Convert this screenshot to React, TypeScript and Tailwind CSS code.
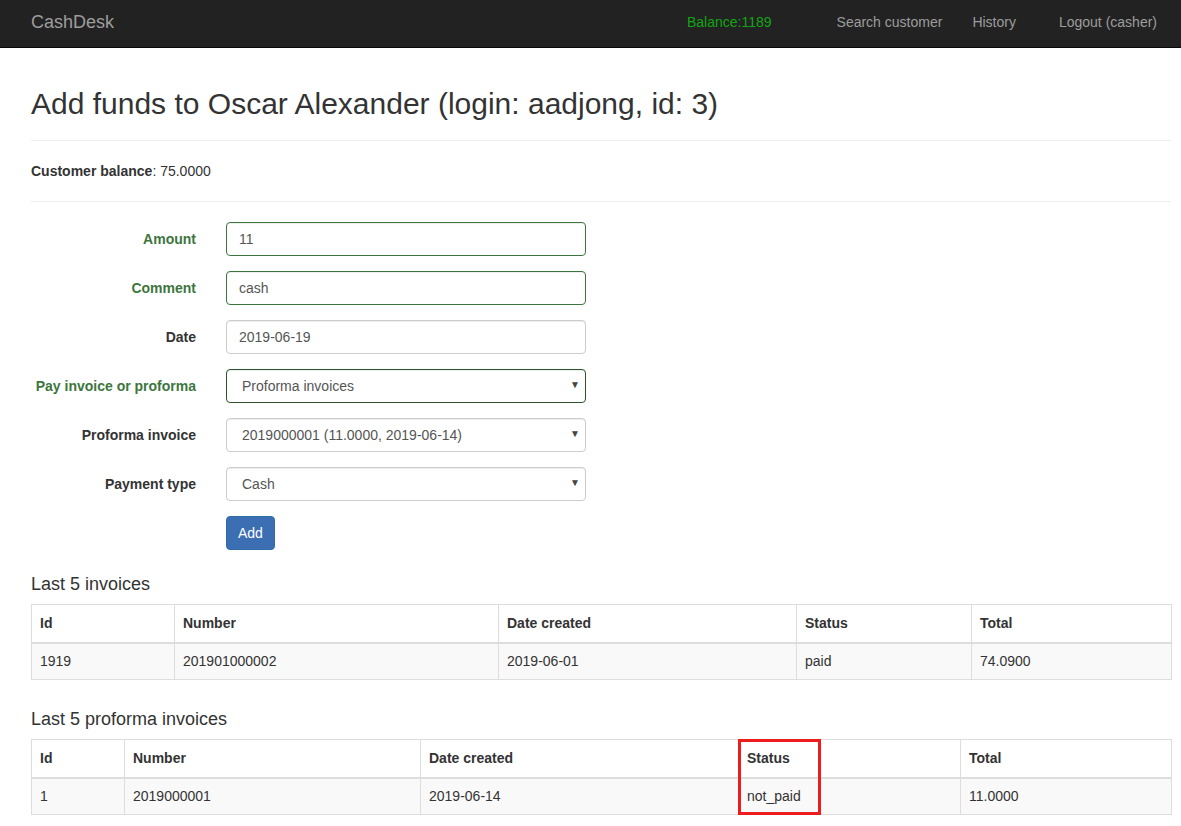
import React from 'react';

type Row = string[];

const font = "font-['Liberation_Sans',Arial,sans-serif]";

function NavBar() {
  return (
    <nav className="h-[48px] bg-[#222] border-b border-[#080808] flex items-center pb-[4px]">
      <span className="ml-[31px] text-[18px] text-[#9d9d9d]">CashDesk</span>
      <div className="ml-auto flex items-center text-[14px] text-[#9d9d9d]">
        <span className="text-[#12a612] mr-[65px]">Balance:1189</span>
        <span className="mr-[30px]">Search customer</span>
        <span className="mr-[43px]">History</span>
        <span className="mr-[24px]">Logout (casher)</span>
      </div>
    </nav>
  );
}

function FieldRow({ label, success, children }: { label: string; success?: boolean; children: React.ReactNode }) {
  return (
    <div className="flex items-center h-[34px] mb-[15px]">
      <label className={`w-[165px] text-right font-bold pr-[30px] box-content ${success ? 'text-[#3c763d]' : 'text-[#333]'}`}>
        {label}
      </label>
      <div className="w-[360px] relative">{children}</div>
    </div>
  );
}

const inputCls =
  'w-full h-[34px] px-[12px] rounded-[4px] border text-[14px] text-[#555] bg-white shadow-[inset_0_1px_1px_rgba(0,0,0,0.075)] outline-none';

function Select({ cls, value, options }: { cls: string; value: string; options: string[] }) {
  return (
    <>
      <select className={`${inputCls} ${cls} appearance-none pl-[15px]`} defaultValue={value}>
        {options.map((o) => (
          <option key={o} value={o}>
            {o}
          </option>
        ))}
      </select>
      <span className="absolute right-[6px] top-[8px] text-[10px] leading-[16px] text-[#444] pointer-events-none">▼</span>
    </>
  );
}

function DataTable({ widths, head, rows, highlight }: { widths: number[]; head: Row; rows: Row[]; highlight?: { left: number; width: number } }) {
  return (
    <div className="relative">
      <table className="w-full table-fixed border-collapse border border-[#ddd] text-[14px]">
        <colgroup>
          {widths.map((w, i) => (
            <col key={i} style={{ width: w }} />
          ))}
        </colgroup>
        <thead>
          <tr>
            {head.map((h) => (
              <th key={h} className="text-left font-bold border border-[#ddd] border-b-2 px-[8px] h-[38px] align-middle">
                {h}
              </th>
            ))}
          </tr>
        </thead>
        <tbody>
          {rows.map((r, i) => (
            <tr key={i} className="bg-[#f9f9f9]">
              {r.map((c, j) => (
                <td key={j} className="border border-[#ddd] px-[8px] h-[37px] align-middle">
                  {c}
                </td>
              ))}
            </tr>
          ))}
        </tbody>
      </table>
      {highlight && (
        <div
          className="absolute top-0 h-[76px] border-[3px] border-[#ee1c1c] pointer-events-none"
          style={{ left: highlight.left, width: highlight.width }}
        />
      )}
    </div>
  );
}

export default function App() {
  return (
    <div className={`${font} min-h-[826px] bg-white text-[#333] text-[14px] leading-[20px]`}>
      <NavBar />
      <main className="pl-[31px] pr-[10px]">
        <h1 className="pt-[39px] text-[30px] leading-[33px] font-normal text-[#333]">
          Add funds to Oscar Alexander (login: aadjong, id: 3)
        </h1>
        <hr className="mt-[20px] border-t border-[#eee]" />
        <p className="mt-[20px] mb-0">
          <b>Customer balance</b>: 75.0000
        </p>
        <hr className="mt-[20px] border-t border-[#eee]" />

        <form className="mt-[20px]">
          <FieldRow label="Amount" success>
            <input className={`${inputCls} border-[#3c763d]`} defaultValue="11" />
          </FieldRow>
          <FieldRow label="Comment" success>
            <input className={`${inputCls} border-[#3c763d]`} defaultValue="cash" />
          </FieldRow>
          <FieldRow label="Date">
            <input className={`${inputCls} border-[#ccc]`} defaultValue="2019-06-19" />
          </FieldRow>
          <FieldRow label="Pay invoice or proforma" success>
            <Select
              cls="border-[#2b542c] shadow-[inset_0_1px_1px_rgba(0,0,0,0.075),0_0_6px_#67b168]"
              value="Proforma invoices"
              options={['Invoices', 'Proforma invoices']}
            />
          </FieldRow>
          <FieldRow label="Proforma invoice">
            <Select
              cls="border-[#ccc]"
              value="2019000001 (11.0000, 2019-06-14)"
              options={['2019000001 (11.0000, 2019-06-14)']}
            />
          </FieldRow>
          <FieldRow label="Payment type">
            <Select cls="border-[#ccc]" value="Cash" options={['Cash', 'Card']} />
          </FieldRow>
          <div className="pl-[195px]">
            <button
              type="button"
              className="h-[34px] px-[11px] rounded-[4px] bg-[#3c6eb4] border border-[#2e6da4] text-white text-[14px]"
            >
              Add
            </button>
          </div>
        </form>

        <h4 className="mt-[24px] mb-[10px] text-[18px] leading-[20px] font-normal">Last 5 invoices</h4>
        <DataTable
          widths={[143, 324, 298, 175, 200]}
          head={['Id', 'Number', 'Date created', 'Status', 'Total']}
          rows={[['1919', '201901000002', '2019-06-01', 'paid', '74.0900']]}
        />

        <h4 className="mt-[29px] mb-[10px] text-[18px] leading-[20px] font-normal">Last 5 proforma invoices</h4>
        <DataTable
          widths={[93, 296, 318, 222, 211]}
          head={['Id', 'Number', 'Date created', 'Status', 'Total']}
          rows={[['1', '2019000001', '2019-06-14', 'not_paid', '11.0000']]}
          highlight={{ left: 707, width: 83 }}
        />
      </main>
    </div>
  );
}
